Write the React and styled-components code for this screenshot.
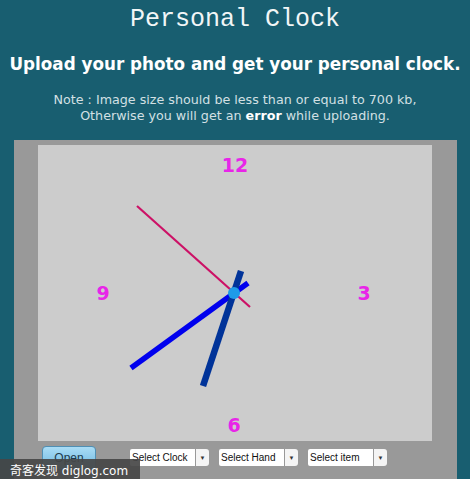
import React from "react";
import styled, { createGlobalStyle } from "styled-components";

const GlobalStyle = createGlobalStyle`
  html, body {
    margin: 0;
    padding: 0;
    background: #185e70;
    overflow: hidden;
  }
`;

const Page = styled.div`
  position: relative;
  width: 470px;
  height: 479px;
  overflow: hidden;
  background: #185e70;
  font-family: "DejaVu Sans", Verdana, sans-serif;
`;

const Header = styled.header`
  display: flex;
  flex-direction: column;
  align-items: center;
  color: #ffffff;
  text-align: center;
`;

const Title = styled.h1`
  margin: 6px 0 0;
  font-family: "Liberation Mono", "Courier New", monospace;
  font-weight: normal;
  font-size: 25px;
  line-height: 28px;
  color: #f2f6f7;
`;

const Lead = styled.h2`
  margin: 20px 0 0;
  font-size: 16.8px;
  line-height: 20px;
  font-weight: bold;
  color: #ffffff;
  white-space: nowrap;
`;

const Note = styled.p`
  margin: 18px 0 0;
  font-size: 12.7px;
  line-height: 16px;
  color: #d3e0e4;

  b {
    color: #ffffff;
  }
`;

const Panel = styled.section`
  margin: 16px 13px 0 14px;
  padding: 5px 25px 0 24px;
  background: #999999;
  height: 400px;
`;

const Face = styled.div`
  height: 296px;
  background: #cccccc;
`;

const Controls = styled.div`
  display: flex;
  align-items: flex-start;
  padding: 5px 0 0 4px;
`;

const OpenButton = styled.button`
  width: 54px;
  height: 24px;
  margin-right: 34px;
  border: 1px solid #4f8fb4;
  border-radius: 4px;
  background: linear-gradient(#a9dcf5, #6fb8e0);
  font-family: "Liberation Sans", Arial, sans-serif;
  font-size: 12px;
  color: #1d3a4c;
  padding: 0;
`;

const Select = styled.div`
  display: flex;
  height: 17px;
  margin-top: 3px;
  margin-right: 10px;
  font-family: "Liberation Sans", Arial, sans-serif;
  font-size: 10px;
  color: #111111;
`;

const SelectText = styled.span`
  display: flex;
  align-items: center;
  width: 63px;
  padding-left: 2px;
  background: #ffffff;
  border-radius: 2px 0 0 2px;
  white-space: nowrap;
`;

const SelectArrow = styled.span`
  display: flex;
  align-items: center;
  justify-content: center;
  width: 13px;
  margin-left: 1px;
  background: #f4f4f4;
  border-radius: 0 3px 3px 0;
  font-size: 6px;
  color: #333333;
`;

const Watermark = styled.div`
  position: absolute;
  left: 0;
  bottom: 0;
  width: 140px;
  height: 20px;
  display: flex;
  align-items: center;
  padding-left: 10px;
  box-sizing: border-box;
  background: rgba(70, 70, 70, 0.92);
  color: #ffffff;
  font-family: "DejaVu Sans", "Noto Sans CJK SC", sans-serif;
  font-size: 12px;
  white-space: nowrap;
`;

const numberStyle = {
  fill: "#e825e8",
  fontFamily: "'DejaVu Sans', sans-serif",
  fontWeight: "bold",
  fontSize: 19,
};

// clock face, coordinates local to the grey face (origin at 38,145)
const ClockDrawing = () => (
  <svg width="394" height="296" viewBox="0 0 394 296">
    <text x="197" y="27" textAnchor="middle" style={numberStyle}>12</text>
    <text x="326" y="155" textAnchor="middle" style={numberStyle}>3</text>
    <text x="65" y="155" textAnchor="middle" style={numberStyle}>9</text>
    <text x="196" y="287" textAnchor="middle" style={numberStyle}>6</text>
    <line x1="99" y1="61" x2="212" y2="162" stroke="#cc1166" strokeWidth="2.2" />
    <line x1="93" y1="223" x2="210" y2="138" stroke="#0000ee" strokeWidth="5.5" />
    <line x1="165" y1="241" x2="203" y2="126" stroke="#003399" strokeWidth="6.5" />
    <circle cx="196" cy="148" r="6" fill="#1e9be8" />
  </svg>
);

const SelectBox = ({ label }) => (
  <Select>
    <SelectText>{label}</SelectText>
    <SelectArrow>▼</SelectArrow>
  </Select>
);

export default function App() {
  return (
    <Page>
      <GlobalStyle />
      <Header>
        <Title>Personal Clock</Title>
        <Lead>Upload your photo and get your personal clock.</Lead>
        <Note>
          Note : Image size should be less than or equal to 700 kb,
          <br />
          Otherwise you will get an <b>error</b> while uploading.
        </Note>
      </Header>
      <Panel>
        <Face>
          <ClockDrawing />
        </Face>
        <Controls>
          <OpenButton>Open</OpenButton>
          <SelectBox label="Select Clock" />
          <SelectBox label="Select Hand" />
          <SelectBox label="Select item" />
        </Controls>
      </Panel>
      <Watermark>奇客发现 diglog.com</Watermark>
    </Page>
  );
}
